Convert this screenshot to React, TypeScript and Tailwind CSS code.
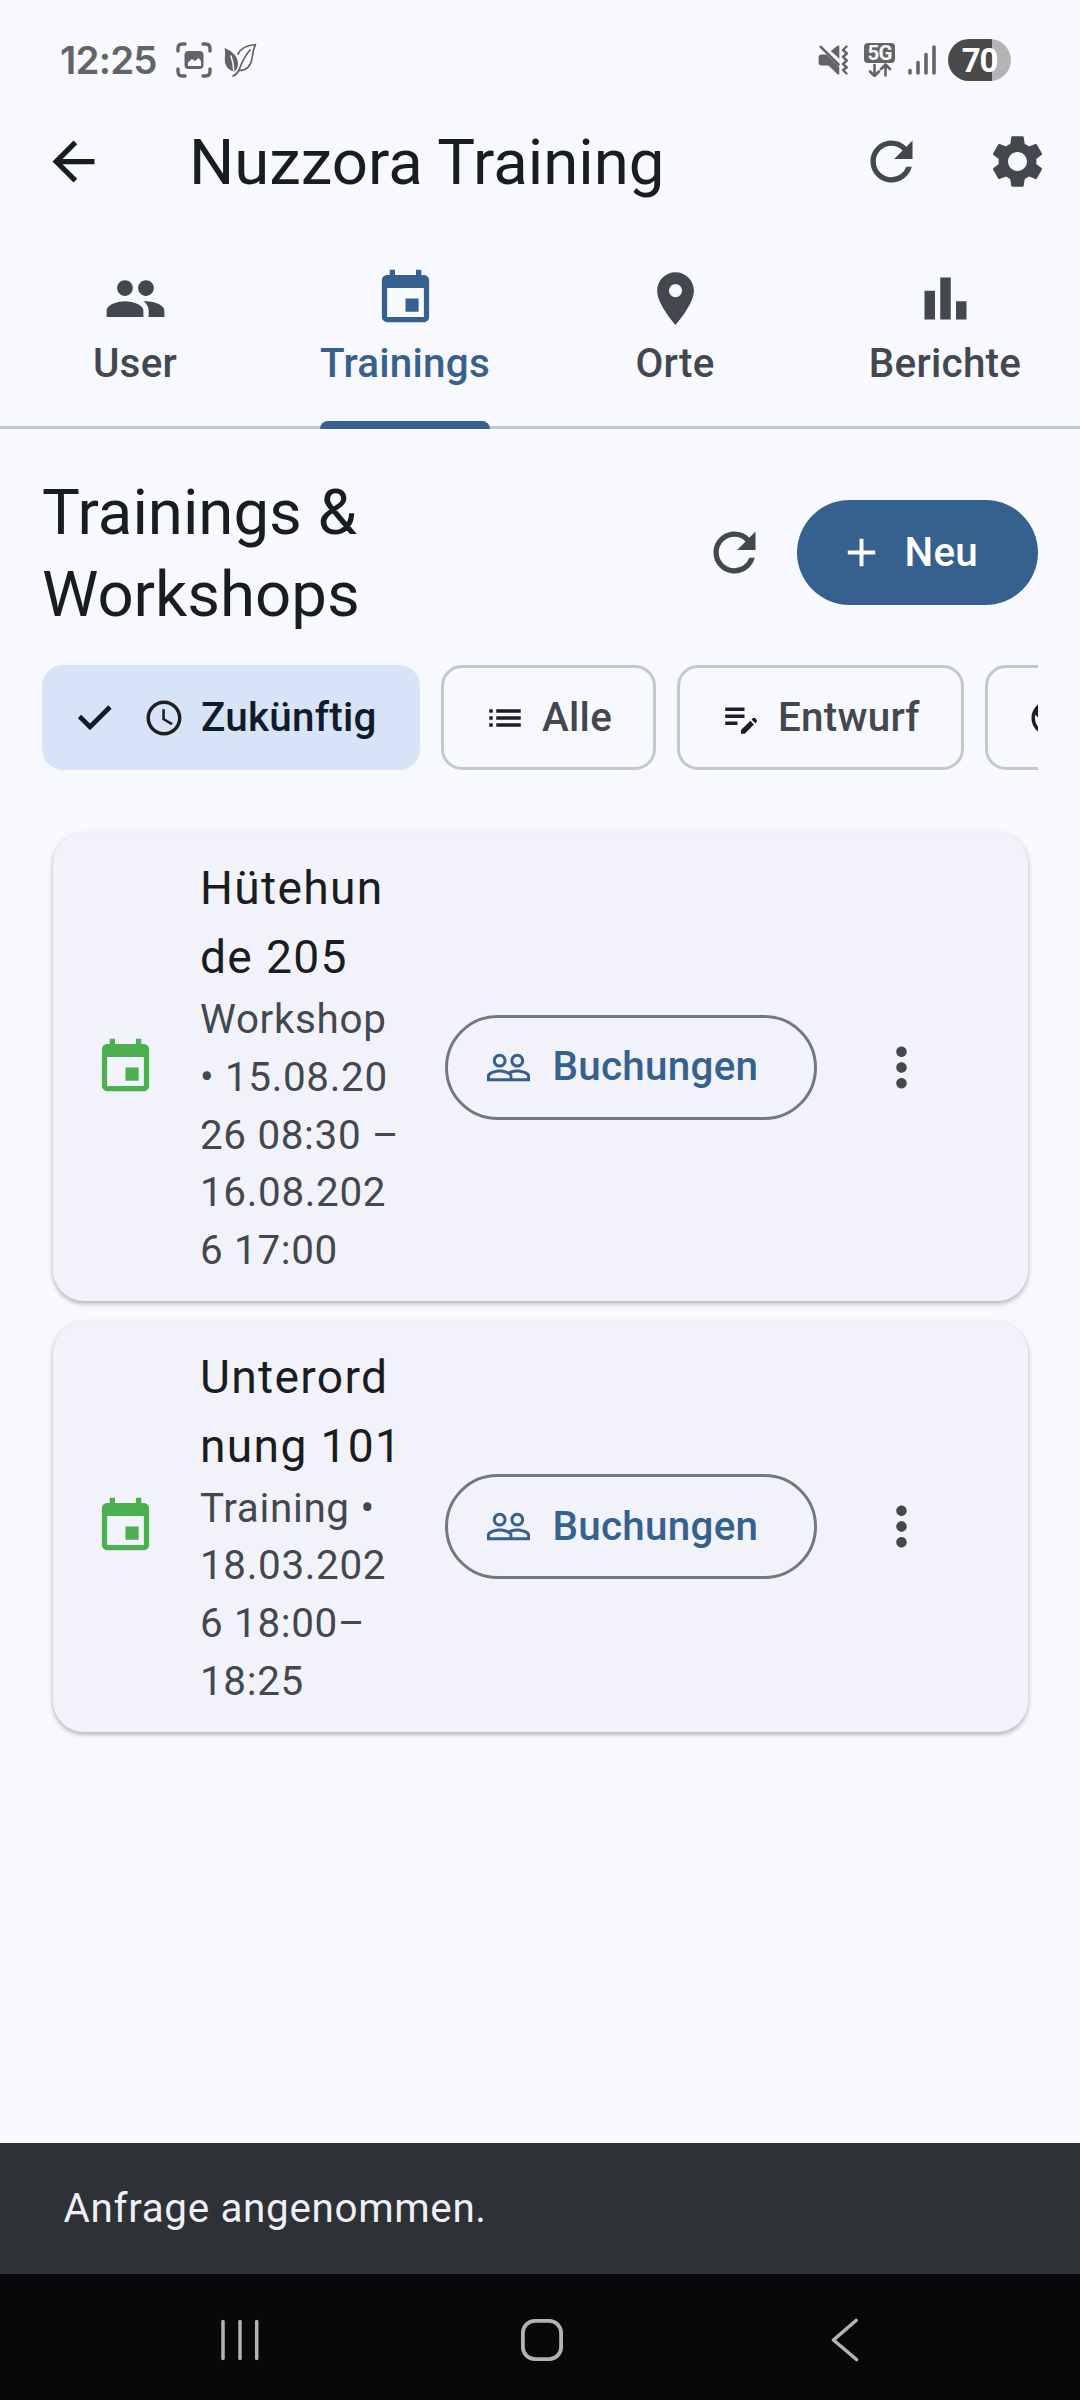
import type { ReactNode } from "react";
import {
  MdArrowBack,
  MdRefresh,
  MdSettings,
  MdPeople,
  MdEvent,
  MdPlace,
  MdBarChart,
  MdAdd,
  MdSchedule,
  MdList,
  MdEditNote,
  MdPublic,
  MdPeopleOutline,
  MdMoreVert,
} from "react-icons/md";

function StatusBar() {
  return (
    <div className="flex h-[88px] items-start justify-between pl-[60px] pr-[69px] text-[#636466]">
      <div className="flex items-center pt-[39px]">
        <span className="w-[116px] whitespace-nowrap font-[Inter] text-[38.5px] font-semibold leading-[42px] tracking-[-0.8px]">
          12:25
        </span>
        <svg className="h-[36px] w-[36px]" viewBox="0 0 36 36" fill="none" stroke="currentColor" strokeWidth="3.4" strokeLinecap="round">
          <path d="M2 9V6.5Q2 2 6.5 2H9M27 2h2.500Q34 2 34 6.500V9M34 27v2.500Q34 34 29.500 34H27M9 34H6.500Q2 34 2 29.500V27" />
          <rect x="8.500" y="9" width="19" height="18" rx="4" fill="currentColor" stroke="none" />
          <path d="M12 24v-3.500l4-3.500 3 2 3.500-3 2.500 3V24z" fill="#f8f9ff" stroke="none" />
        </svg>
        <svg className="ml-[12px] h-[34px] w-[33px]" viewBox="0 0 33 34" fill="none" stroke="currentColor" strokeWidth="1.700" strokeLinejoin="round" strokeLinecap="round">
          <path d="M.5 5C5 7 14 11 14 21c0 3-1 6-3.500 7.500C4 27.500.5 22 .8 16c.2-4 .7-7-.3-11z" fill="currentColor" stroke="none" />
          <path d="M7 13c1.500 4 2.500 9 2.700 14.500" stroke="#f8f9ff" strokeWidth="1.500" />
          <path d="M14 11C17 5 24 2 31.500 1.500c-2.500 5-2.500 9-3.500 14C27 23 22 27.500 15.500 27.500" />
          <path d="M26 7C21 13 17.500 20 15 27c-1.500 3-3.500 5-6 6" />
        </svg>
      </div>
      <div className="flex items-center pt-[39px]">
        <svg className="h-[30px] w-[31px]" viewBox="0 0 31 30" fill="none">
          <path d="M3.500 9.500H8.500L21.300 22V29.200Q20.500 30 19.500 29.200L10.500 20.500H3.500Q.6 20.500.6 17.500V12.500Q.6 9.500 3.500 9.500z" fill="currentColor" />
          <path d="M2.800 1.800 20.500 19.500" stroke="currentColor" strokeWidth="2.600" strokeLinecap="round" />
          <path d="M12.700 5.900 19.500 .8Q21.300 0 21.300 1.500V13.800z" fill="currentColor" />
          <path d="M28.500 1.500 25 5l3.800 3.500L25 12l3.800 3.500L25 19l3.800 3.500L25 25l3.500 3.500" stroke="currentColor" strokeWidth="2.400" strokeLinecap="round" strokeLinejoin="round" />
        </svg>
        <div className="ml-[15px] flex w-[31px] flex-col items-center">
          <span className="flex h-[20px] w-[31px] items-center justify-center rounded-[4px] bg-[#636466] font-[Roboto] text-[20.5px] font-bold leading-none tracking-[-0.8px] text-[#f8f9ff]">
            5G
          </span>
          <svg className="h-[14px] w-[24px]" viewBox="0 0 24 14" fill="none" stroke="currentColor" strokeWidth="2.600" strokeLinecap="round" strokeLinejoin="round">
            <path d="M6.500 2v11M2 8.500l4.500 4.500 4.500-4.500M17.500 12.500V1.800M13 6l4.500-4.500L22 6" />
          </svg>
        </div>
        <svg className="ml-[13px] h-[30px] w-[28px]" viewBox="0 0 28 30" stroke="currentColor" strokeWidth="3.600" strokeLinecap="round">
          <path d="M2 25.500v2.500M10 17.500v10.500" />
          <path d="M18 9.500v18.500M26 2v26" />
        </svg>
        <div className="ml-[12px] flex h-[42px] w-[63px] items-center justify-center rounded-full bg-[linear-gradient(90deg,#4a4a4b_70%,#b2b3b7_70%)] pt-px font-[Roboto] text-[33px] font-bold leading-none tracking-[-1.2px] text-white">
          70
        </div>
      </div>
    </div>
  );
}

function AppBar() {
  return (
    <header className="flex h-[147px] items-center text-[#43474e]">
      <div className="flex w-[147px] justify-center">
        <MdArrowBack className="size-[63px] text-[#191c20]" />
      </div>
      <h1 className="ml-[42px] flex-1 whitespace-nowrap pt-[2px] text-[63.5px] leading-[81px] text-[#191c20]">Nuzzora Training</h1>
      <div className="flex w-[126px] justify-center">
        <MdRefresh className="size-[63px]" />
      </div>
      <div className="flex w-[126px] justify-center">
        <MdSettings className="size-[63px]" />
      </div>
    </header>
  );
}

function Tab({ icon, label, active = false }: { icon: ReactNode; label: string; active?: boolean }) {
  return (
    <div
      className={
        active
          ? "flex flex-1 flex-col items-center pt-[32px] text-[#36618e]"
          : "flex flex-1 flex-col items-center pt-[32px] text-[#43474e]"
      }
    >
      {icon}
      <div className="mt-[5px] flex h-[94px] shrink-0 flex-col justify-between">
        <span className="text-[40.4px] font-medium leading-[58px] tracking-[0.26px]">{label}</span>
        {active && <span className="h-[8px] w-full rounded-t-[8px] bg-[#36618e]" />}
      </div>
    </div>
  );
}

function Chip({ icon, label, className }: { icon: ReactNode; label?: string; className: string }) {
  return (
    <div className={"flex h-[105px] shrink-0 items-center rounded-[21px] whitespace-nowrap " + className}>
      {icon}
      {label && <span className="ml-[16px] text-[40.4px] font-medium leading-[58px] tracking-[0.26px]">{label}</span>}
    </div>
  );
}

function TrainingCard({ title, details, className }: { title: string[]; details: string[]; className: string }) {
  return (
    <article
      className={
        "flex items-center rounded-[31px] bg-[#f2f3fa] pl-[41.5px] shadow-[0_3px_4px_rgba(0,0,0,0.2),0_1px_6px_rgba(0,0,0,0.1)] " +
        className
      }
    >
      <MdEvent className="size-[63px] shrink-0 text-[#4caf50]" />
      <div className="ml-[43px] w-[244.5px] whitespace-nowrap">
        <h3 className="text-[46.2px] leading-[69px] tracking-[1.31px] text-[#191c20]">
          {title.map((line) => (
            <span key={line} className="block">{line}</span>
          ))}
        </h3>
        <p className="-mt-px text-[40.4px] leading-[57.75px] tracking-[0.66px] text-[#43474e]">
          {details.map((line) => (
            <span key={line} className="block">{line}</span>
          ))}
        </p>
      </div>
      <button className="flex h-[105px] w-[372px] items-center rounded-full border-[3px] border-[#73777f] pl-[37px] text-[#36618e]">
        <MdPeopleOutline className="size-[47px]" />
        <span className="ml-[21px] text-[40.4px] font-medium leading-[58px] tracking-[0.26px]">Buchungen</span>
      </button>
      <MdMoreVert className="ml-[53px] size-[63px] text-[#43474e]" />
    </article>
  );
}

function NavigationBar() {
  return (
    <nav className="flex h-[126px] items-center bg-[#070809] pb-px pt-[7px] text-[#b3b3b4]">
      <svg className="ml-[220px] h-[44px] w-[40px]" viewBox="0 0 40 44" stroke="currentColor" strokeWidth="3.500" strokeLinecap="round">
        <path d="M3 3.500v37M20 3.500v37M36.700 3.500v37" />
      </svg>
      <svg className="ml-[260px] h-[44px] w-[44px]" viewBox="0 0 44 44" fill="none" stroke="currentColor" strokeWidth="3.800">
        <rect x="2.900" y="2.900" width="38.200" height="38.200" rx="12" />
      </svg>
      <svg className="ml-[266px] h-[44px] w-[30px]" viewBox="0 0 30 44" fill="none" stroke="currentColor" strokeWidth="3.600" strokeLinecap="round" strokeLinejoin="round">
        <path d="M26 2.500 3.500 22l23 19.500" />
      </svg>
    </nav>
  );
}

export default function App() {
  return (
    <div className="flex h-[2400px] w-[1080px] flex-col overflow-hidden bg-[#f8f9ff] font-[Roboto,sans-serif]">
      <StatusBar />
      <AppBar />
      <div className="flex h-[194px] border-b-[3px] border-[#c3c7cf]">
        <Tab icon={<MdPeople className="size-[63px] shrink-0" />} label="User" />
        <Tab icon={<MdEvent className="size-[63px] shrink-0" />} label="Trainings" active />
        <Tab icon={<MdPlace className="size-[63px] shrink-0" />} label="Orte" />
        <Tab icon={<MdBarChart className="size-[63px] shrink-0" />} label="Berichte" />
      </div>

      <main className="flex flex-1 flex-col px-[42px]">
        <div className="mt-[42px] flex h-[163px] items-center">
          <h2 className="flex-1 pt-[3px] text-[63.5px] leading-[82px] text-[#191c20]">
            Trainings &<br />
            Workshops
          </h2>
          <MdRefresh className="mr-[31px] size-[63px] text-[#43474e]" />
          <button className="flex h-[105px] w-[241px] items-center rounded-full bg-[#36618e] pl-[40.5px] text-white">
            <MdAdd className="size-[47px]" />
            <span className="ml-[20px] text-[40.4px] font-medium leading-[58px] tracking-[0.26px]">Neu</span>
          </button>
        </div>

        <div className="mt-[31px] flex gap-[21px] overflow-hidden">
          <Chip
            className="w-[378px] bg-[#d7e3f7] pl-[36px] text-[#101c2b]"
            label="Zukünftig"
            icon={
              <>
                <svg className="h-[27px] w-[36px]" viewBox="0 0 36 27" fill="none" stroke="currentColor" strokeWidth="4.700">
                  <path d="M1.500 12.500 12 23 32 3" />
                </svg>
                <MdSchedule className="ml-[29px] size-[42px] text-[#1f1f21]" />
              </>
            }
          />
          <Chip
            className="w-[215px] border-[3px] border-[#c3c7cf] pl-[40px] text-[#43474e]"
            label="Alle"
            icon={<MdList className="size-[42px] text-[#1f1f21]" />}
          />
          <Chip
            className="w-[287px] border-[3px] border-[#c3c7cf] pl-[40px] text-[#43474e]"
            label="Entwurf"
            icon={<MdEditNote className="size-[42px] text-[#1f1f21]" />}
          />
          <Chip
            className="w-[130px] border-[3px] border-[#c3c7cf] pl-[40px] text-[#43474e]"
            icon={<MdPublic className="size-[42px] text-[#1f1f21]" />}
          />
        </div>

        <div className="mt-[63px] flex flex-col gap-[20.5px] px-[10.5px]">
          <TrainingCard
            className="h-[468px]"
            title={["Hütehun", "de 205"]}
            details={["Workshop", "• 15.08.20", "26 08:30 –", "16.08.202", "6 17:00"]}
          />
          <TrainingCard
            className="h-[410px]"
            title={["Unterord", "nung 101"]}
            details={["Training •", "18.03.202", "6 18:00–", "18:25"]}
          />
        </div>
      </main>

      <div className="flex h-[131px] items-center bg-[#2e3135] px-[63.5px] text-[40.4px] leading-[58px] tracking-[0.66px] text-[#eff0f7]">
        Anfrage angenommen.
      </div>
      <NavigationBar />
    </div>
  );
}
